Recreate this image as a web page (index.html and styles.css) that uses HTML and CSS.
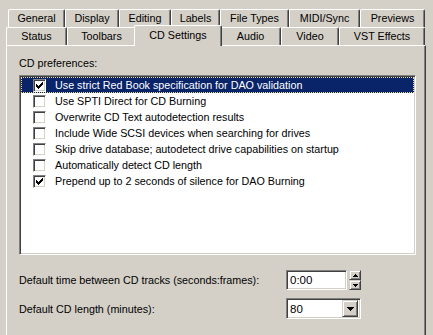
FILE: index.html
```html
<!DOCTYPE html>
<html>
<head>
<meta charset="utf-8">
<link rel="stylesheet" href="styles.css">
</head>
<body>
<div class="dialog">
  <div class="tabs">
    <div class="tabrow row1">
      <div class="tab w-general">General</div>
      <div class="tab w-display">Display</div>
      <div class="tab w-editing">Editing</div>
      <div class="tab w-labels">Labels</div>
      <div class="tab w-filetypes">File Types</div>
      <div class="tab w-midi">MIDI/Sync</div>
      <div class="tab w-previews">Previews</div>
    </div>
    <div class="tabrow row2">
      <div class="tab w-status">Status</div>
      <div class="tab w-toolbars">Toolbars</div>
      <div class="tab w-cd selected">CD Settings</div>
      <div class="tab w-audio">Audio</div>
      <div class="tab w-video">Video</div>
      <div class="tab w-vst">VST Effects</div>
    </div>
  </div>
  <div class="panel">
    <div class="group-label">CD preferences:</div>
    <div class="listbox">
      <div class="item sel"><span class="cb"><svg width="13" height="13" viewBox="0 0 13 13" shape-rendering="crispEdges"><rect x="3" y="5" width="1" height="3"/><rect x="4" y="6" width="1" height="3"/><rect x="5" y="7" width="1" height="3"/><rect x="6" y="6" width="1" height="3"/><rect x="7" y="5" width="1" height="3"/><rect x="8" y="4" width="1" height="3"/><rect x="9" y="3" width="1" height="3"/></svg></span><span class="txt">Use strict Red Book specification for DAO validation</span></div>
      <div class="item"><span class="cb"></span><span class="txt">Use SPTI Direct for CD Burning</span></div>
      <div class="item"><span class="cb"></span><span class="txt">Overwrite CD Text autodetection results</span></div>
      <div class="item"><span class="cb"></span><span class="txt">Include Wide SCSI devices when searching for drives</span></div>
      <div class="item"><span class="cb"></span><span class="txt">Skip drive database; autodetect drive capabilities on startup</span></div>
      <div class="item"><span class="cb"></span><span class="txt">Automatically detect CD length</span></div>
      <div class="item"><span class="cb"><svg width="13" height="13" viewBox="0 0 13 13" shape-rendering="crispEdges"><rect x="3" y="5" width="1" height="3"/><rect x="4" y="6" width="1" height="3"/><rect x="5" y="7" width="1" height="3"/><rect x="6" y="6" width="1" height="3"/><rect x="7" y="5" width="1" height="3"/><rect x="8" y="4" width="1" height="3"/><rect x="9" y="3" width="1" height="3"/></svg></span><span class="txt">Prepend up to 2 seconds of silence for DAO Burning</span></div>
    </div>
    <div class="field spin-row">
      <div class="flabel">Default time between CD tracks (seconds:frames):</div>
      <div class="edit spin-edit">0:00</div>
      <div class="spinner">
        <div class="btn sbtn"><svg width="5" height="3" viewBox="0 0 5 3" shape-rendering="crispEdges"><path d="M2 0h1v1h1v1h1v1H0V2h1V1h1z"/></svg></div>
        <div class="btn sbtn"><svg width="5" height="3" viewBox="0 0 5 3" shape-rendering="crispEdges"><path d="M0 0h5v1H4v1H3v1H2V2H1V1H0z"/></svg></div>
      </div>
    </div>
    <div class="field combo-row">
      <div class="flabel">Default CD length (minutes):</div>
      <div class="combo">
        <span class="combo-text">80</span>
        <div class="btn cbtn"><svg width="7" height="4" viewBox="0 0 7 4" shape-rendering="crispEdges"><path d="M0 0h7v1H6v1H5v1H4v1H3V3H2V2H1V1H0z"/></svg></div>
      </div>
    </div>
  </div>
</div>
</body>
</html>
```
FILE: styles.css
```css
html, body {
  margin: 0;
  padding: 0;
}
body {
  background: #d4d0c8;
  font-family: "Liberation Sans", Arial, sans-serif;
  font-size: 10.75px;
  color: #000;
  width: 433px;
  height: 335px;
  overflow: hidden;
}
.dialog {
  padding-top: 9px;
}
.tabs {
  display: flex;
  flex-direction: column;
}
.tabrow {
  display: flex;
  height: 18px;
}
.row1 { padding-left: 8px; }
.row2 { padding-left: 6px; }
.tab {
  box-sizing: border-box;
  height: 18px;
  flex: none;
  border-top: 1px solid #fff;
  border-left: 1px solid #fff;
  border-right: 1px solid #404040;
  box-shadow: inset -1px 0 #808080;
  border-radius: 2px 2px 0 0;
  display: flex;
  align-items: center;
  justify-content: center;
  padding-bottom: 1px;
  background: #d4d0c8;
}
.tab.selected {
  height: 21px;
  margin: -2px -2px 0 -2px;
  padding-bottom: 3px;
  position: relative;
  z-index: 2;
}
.w-general { width: 57px; }
.w-display { width: 54px; }
.w-editing { width: 52px; }
.w-labels { width: 49px; }
.w-filetypes { width: 69px; }
.w-midi { width: 71px; }
.w-previews { width: 65px; }
.w-status { width: 61px; }
.w-toolbars { width: 69px; }
.w-cd { width: 88px; }
.w-audio { width: 61px; }
.w-video { width: 58px; }
.w-vst { width: 86px; }

.panel {
  box-sizing: border-box;
  margin-left: 6px;
  width: 420px;
  height: 300px;
  border-top: 1px solid #fff;
  border-left: 1px solid #fff;
  border-right: 1px solid #404040;
  box-shadow: inset -1px 0 #808080;
  padding: 11px 0 0 12px;
  display: flex;
  flex-direction: column;
  align-items: flex-start;
}
.group-label {
  line-height: 13px;
  height: 13px;
}
.listbox {
  box-sizing: border-box;
  margin-top: 5px;
  width: 397px;
  height: 180px;
  background: #fff;
  border-top: 1px solid #808080;
  border-left: 1px solid #808080;
  border-right: 1px solid #fff;
  border-bottom: 1px solid #fff;
  box-shadow: inset 1px 1px #404040, inset -1px -1px #d4d0c8;
  padding: 1px;
  display: flex;
  flex-direction: column;
}
.item {
  box-sizing: border-box;
  height: 16px;
  display: flex;
  align-items: center;
  padding-left: 12px;
  white-space: nowrap;
}
.item.sel {
  background: #0a246a;
  color: #fff;
  outline: 1px dotted #e9dc9a;
  outline-offset: -1px;
}
.cb {
  box-sizing: border-box;
  width: 13px;
  height: 13px;
  flex: none;
  background: #fff;
  border-top: 1px solid #808080;
  border-left: 1px solid #808080;
  border-right: 1px solid #fff;
  border-bottom: 1px solid #fff;
  box-shadow: inset 1px 1px #404040, inset -1px -1px #d4d0c8;
  margin-right: 9px;
  position: relative;
}
.cb svg {
  position: absolute;
  left: -1px;
  top: -1px;
  fill: #000;
}
.txt {
  line-height: 16px;
}
.field {
  display: flex;
  align-items: center;
}
.spin-row {
  margin-top: 15px;
  height: 20px;
}
.combo-row {
  margin-top: 8px;
  height: 21px;
}
.flabel {
  width: 267px;
  flex: none;
}
.edit, .combo {
  box-sizing: border-box;
  background: #fff;
  border-top: 1px solid #808080;
  border-left: 1px solid #808080;
  border-right: 1px solid #fff;
  border-bottom: 1px solid #fff;
  box-shadow: inset 1px 1px #404040, inset -1px -1px #d4d0c8;
}
.spin-edit {
  width: 61px;
  height: 20px;
  padding-left: 3px;
  line-height: 18px;
  font-size: 11.5px;
}
.spinner {
  margin-left: 2px;
  width: 12px;
  height: 20px;
  display: flex;
  flex-direction: column;
}
.btn {
  box-sizing: border-box;
  background: #d4d0c8;
  border-top: 1px solid #d4d0c8;
  border-left: 1px solid #d4d0c8;
  border-right: 1px solid #404040;
  border-bottom: 1px solid #404040;
  box-shadow: inset 1px 1px #fff, inset -1px -1px #808080;
  display: flex;
  align-items: center;
  justify-content: center;
}
.btn svg { fill: #000; }
.sbtn {
  height: 10px;
  width: 12px;
}
.combo {
  width: 75px;
  height: 21px;
  display: flex;
  align-items: center;
  padding: 2px;
}
.combo-text {
  flex: 1;
  padding-left: 1px;
  font-size: 11.5px;
}
.cbtn {
  width: 16px;
  height: 17px;
  flex: none;
}
```
